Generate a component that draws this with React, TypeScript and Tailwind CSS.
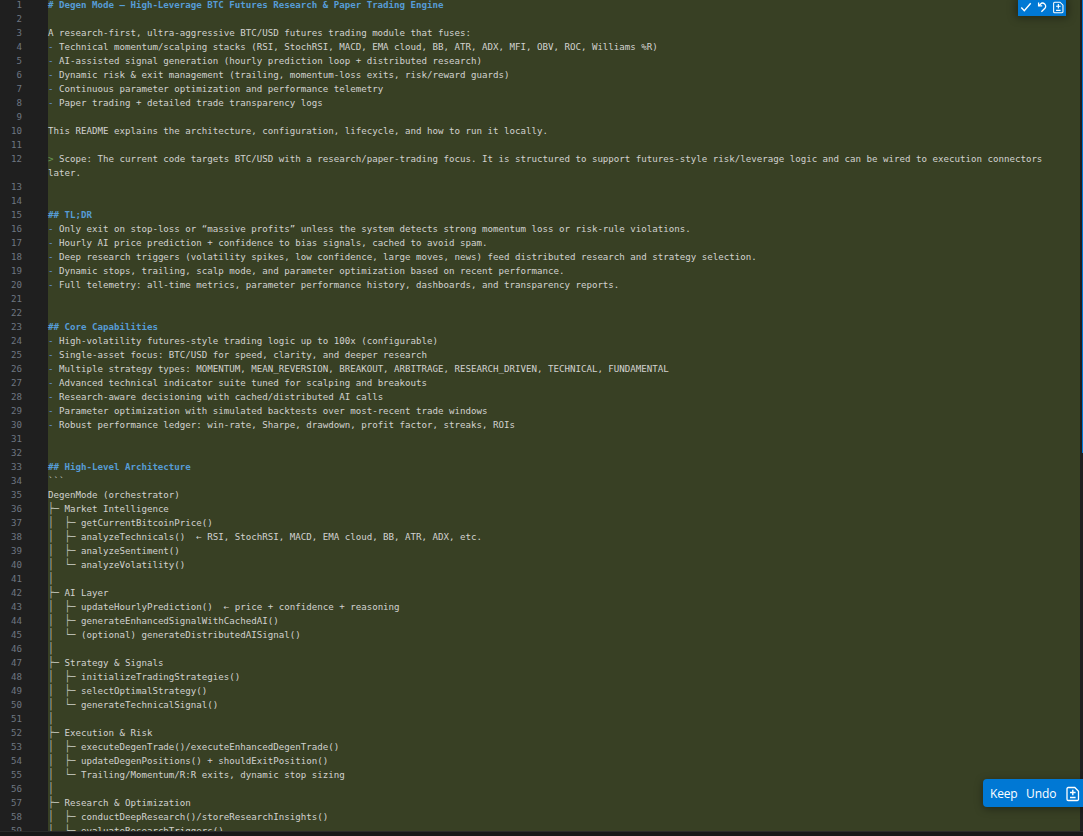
import React from 'react';

const source = `# Degen Mode — High-Leverage BTC Futures Research & Paper Trading Engine

A research-first, ultra-aggressive BTC/USD futures trading module that fuses:
- Technical momentum/scalping stacks (RSI, StochRSI, MACD, EMA cloud, BB, ATR, ADX, MFI, OBV, ROC, Williams %R)
- AI-assisted signal generation (hourly prediction loop + distributed research)
- Dynamic risk & exit management (trailing, momentum-loss exits, risk/reward guards)
- Continuous parameter optimization and performance telemetry
- Paper trading + detailed trade transparency logs

This README explains the architecture, configuration, lifecycle, and how to run it locally.

> Scope: The current code targets BTC/USD with a research/paper-trading focus. It is structured to support futures-style risk/leverage logic and can be wired to execution connectors later.


## TL;DR
- Only exit on stop-loss or “massive profits” unless the system detects strong momentum loss or risk-rule violations.
- Hourly AI price prediction + confidence to bias signals, cached to avoid spam.
- Deep research triggers (volatility spikes, low confidence, large moves, news) feed distributed research and strategy selection.
- Dynamic stops, trailing, scalp mode, and parameter optimization based on recent performance.
- Full telemetry: all-time metrics, parameter performance history, dashboards, and transparency reports.


## Core Capabilities
- High-volatility futures-style trading logic up to 100x (configurable)
- Single-asset focus: BTC/USD for speed, clarity, and deeper research
- Multiple strategy types: MOMENTUM, MEAN_REVERSION, BREAKOUT, ARBITRAGE, RESEARCH_DRIVEN, TECHNICAL, FUNDAMENTAL
- Advanced technical indicator suite tuned for scalping and breakouts
- Research-aware decisioning with cached/distributed AI calls
- Parameter optimization with simulated backtests over most-recent trade windows
- Robust performance ledger: win-rate, Sharpe, drawdown, profit factor, streaks, ROIs


## High-Level Architecture
\`\`\`
DegenMode (orchestrator)
├─ Market Intelligence
│  ├─ getCurrentBitcoinPrice()
│  ├─ analyzeTechnicals()  ← RSI, StochRSI, MACD, EMA cloud, BB, ATR, ADX, etc.
│  ├─ analyzeSentiment()
│  └─ analyzeVolatility()
│
├─ AI Layer
│  ├─ updateHourlyPrediction()  ← price + confidence + reasoning
│  ├─ generateEnhancedSignalWithCachedAI()
│  └─ (optional) generateDistributedAISignal()
│
├─ Strategy & Signals
│  ├─ initializeTradingStrategies()
│  ├─ selectOptimalStrategy()
│  └─ generateTechnicalSignal()
│
├─ Execution & Risk
│  ├─ executeDegenTrade()/executeEnhancedDegenTrade()
│  ├─ updateDegenPositions() + shouldExitPosition()
│  └─ Trailing/Momentum/R:R exits, dynamic stop sizing
│
├─ Research & Optimization
│  ├─ conductDeepResearch()/storeResearchInsights()
│  └─ evaluateResearchTriggers()`;

const lines = source.split('\n');

interface IconProps {
  className?: string;
}

const CheckIcon: React.FC<IconProps> = ({ className }) => (
  <svg viewBox="0 0 12 12" fill="none" stroke="currentColor" strokeWidth="1.4" className={className}>
    <path d="M1.3 6.6l3 3.2 6.4-7.6" />
  </svg>
);

const DiscardIcon: React.FC<IconProps> = ({ className }) => (
  <svg viewBox="0 0 12 12" fill="none" stroke="currentColor" strokeWidth="1.3" className={className}>
    <path d="M2.6 1.6v3.3h3.6" />
    <path d="M2.8 4.7l1.6-1.5a3 3 0 0 1 4.5 4L5.4 10.8" />
  </svg>
);

const DiffFileIcon: React.FC<IconProps> = ({ className }) => (
  <svg viewBox="0 0 16 16" fill="none" stroke="currentColor" className={className}>
    <path d="M3.2 1.5h6.6l3.7 3.7v8.1a1.2 1.2 0 0 1-1.2 1.2H3.2A1.2 1.2 0 0 1 2 13.3V2.7a1.2 1.2 0 0 1 1.2-1.2z" strokeWidth="1.3" />
    <path d="M7.8 3.8v5.4M5 6.5h5.6M5 11.5h5.6" strokeWidth="1.4" />
  </svg>
);

const LineText: React.FC<{ text: string }> = ({ text }) => {
  if (text.startsWith('#')) {
    return <span className="font-bold text-[#569cd6]">{text}</span>;
  }
  if (text.startsWith('- ')) {
    return <><span className="text-[#6796e6]">-</span>{text.slice(1)}</>;
  }
  if (text.startsWith('> ')) {
    return <><span className="text-[#6a9955]">&gt;</span>{text.slice(1)}</>;
  }
  const tree = text.match(/^[│├└─ ]+/);
  if (tree) {
    return (
      <>
        <span className="inline-block origin-[50%_55%] scale-y-[1.15] text-[#bfc2b6]">{tree[0]}</span>
        {text.slice(tree[0].length)}
      </>
    );
  }
  return <>{text}</>;
};

const App: React.FC = () => {
  return (
    <div className="relative flex h-[836px] w-[1083px] flex-col overflow-hidden bg-[#181818]">
      <div className="flex h-[831px] overflow-hidden bg-[#1f1f1f]">
        <div className="-mt-0.5 w-[1080px] shrink-0 bg-[linear-gradient(to_right,#1f1f1f_48px,#384024_48px)] font-['DejaVu_Sans_Mono',monospace] text-[9.137px] leading-[14px] text-[#d2d2d0]">
          {lines.map((text, i) => (
            <div key={i} className="flex min-h-3.5">
              <span className="w-[22px] shrink-0 text-right text-[#6e7681]">{i + 1}</span>
              <div className="ml-[26px] w-[1002px] whitespace-pre-wrap">
                <LineText text={text} />
              </div>
            </div>
          ))}
        </div>
        <div className="ml-0.5 h-[453px] w-px bg-[#0078d4]" />
      </div>
      <div className="h-px bg-[#2b2b2b]" />

      <div className="absolute left-[1018px] top-0 flex h-4 w-12 items-center bg-[#0078d4] pb-0.5 text-white shadow-[0_0_8px_2px_rgba(0,0,0,0.36)]">
        <span className="flex w-4 justify-center"><CheckIcon className="size-3" /></span>
        <span className="flex w-4 justify-center"><DiscardIcon className="size-3" /></span>
        <span className="flex w-4 justify-center"><DiffFileIcon className="size-[13px]" /></span>
      </div>

      <div className="absolute left-[983px] top-[779px] flex h-7 w-[108px] items-center rounded bg-[#0078d4] pl-[7px] pt-px font-['Open_Sans',sans-serif] text-xs font-medium text-white shadow-[0_2px_8px_rgba(0,0,0,0.36)]">
        <span className="w-9 tracking-[-0.2px]">Keep</span>
        <span className="w-[39px] tracking-[-0.1px]">Undo</span>
        <DiffFileIcon className="size-4" />
      </div>
    </div>
  );
};

export default App;
